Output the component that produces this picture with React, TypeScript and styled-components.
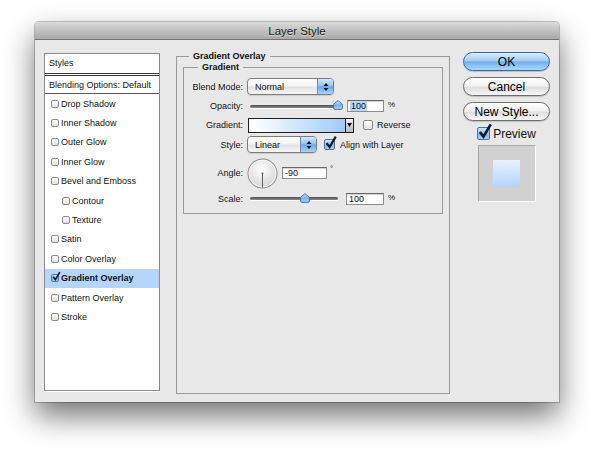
import React from "react";
import styled, { createGlobalStyle } from "styled-components";

const GlobalStyle = createGlobalStyle`
  *, *::before, *::after { box-sizing: border-box; }
  html, body { margin: 0; padding: 0; background: #fff; }
  body { font-family: "Liberation Sans", Arial, sans-serif; color: #111; }
`;

const Page = styled.div`
  width: 594px;
  height: 451px;
  padding: 22px 0 0 35px;
  overflow: hidden;
`;

const Window = styled.div`
  width: 524px;
  height: 380px;
  display: flex;
  flex-direction: column;
  background: #e8e8e8;
  border-radius: 4px 4px 0 0;
  box-shadow: 0 14px 30px rgba(0, 0, 0, 0.55), 0 0 0 1px rgba(0, 0, 0, 0.22);
  font-size: 9px;
`;

const TitleBar = styled.div`
  height: 18px;
  flex: none;
  display: flex;
  align-items: center;
  justify-content: center;
  border-bottom: 1px solid #727272;
  border-radius: 4px 4px 0 0;
  background: linear-gradient(#dadada, #a8a8a8);
  font-size: 11.5px;
  color: #1a1a1a;
  text-shadow: 0 1px 0 rgba(255, 255, 255, 0.45);
`;

const Body = styled.div`
  flex: 1;
  display: flex;
  align-items: flex-start;
  padding: 11px 0 0 9px;
`;

/* ---------- left style list ---------- */

const List = styled.div`
  width: 116px;
  height: 338px;
  margin-top: 2px;
  display: flex;
  flex-direction: column;
  background: #fff;
  border: 1px solid #8c8c8c;
  box-shadow: 0 1px 0 #fbfbfb;
`;

const ListHeader = styled.div`
  height: 22px;
  display: flex;
  align-items: center;
  padding: 0 0 2px 4px;
  border-bottom: 3px double #3a3a3a;
`;

const BlendRow = styled.div`
  height: 18px;
  display: flex;
  align-items: center;
  padding-left: 4px;
  border-bottom: 1px solid #5a5a5a;
`;

const Item = styled.div<{ $indent?: boolean; $selected?: boolean }>`
  height: 19.4px;
  flex: none;
  display: flex;
  align-items: center;
  gap: 2px;
  padding-left: ${(p) => (p.$indent ? 17 : 6)}px;
  background: ${(p) => (p.$selected ? "#b5d5ff" : "transparent")};
  font-weight: ${(p) => (p.$selected ? "bold" : "normal")};
`;

/* ---------- checkbox ---------- */

const Box = styled.span<{ $size: number; $checked?: boolean }>`
  position: relative;
  flex: none;
  display: inline-block;
  width: ${(p) => p.$size}px;
  height: ${(p) => p.$size}px;
  border-radius: 2px;
  border: 1px solid ${(p) => (p.$checked ? "#4f73a0" : "#8a8a8a")};
  background: ${(p) =>
    p.$checked
      ? "linear-gradient(#d3e5f8, #8db8e9 55%, #a9cdf3)"
      : "linear-gradient(#ffffff, #e2e2e2)"};
`;

const Tick = styled.svg`
  position: absolute;
  left: 0;
  top: -2px;
  overflow: visible;
`;

function CheckBox({ size, checked }: { size: number; checked?: boolean }) {
  return (
    <Box $size={size} $checked={checked}>
      {checked && (
        <Tick width={size} height={size} viewBox="0 0 10 10">
          <path d="M1.4 4.6 L4.2 8.2 L9.8 -1.2" fill="none" stroke="#0e1a2c" strokeWidth="2" />
        </Tick>
      )}
    </Box>
  );
}

/* ---------- group boxes ---------- */

const Group = styled.fieldset`
  margin: 0;
  padding: 0;
  min-width: 0;
  border: 1px solid #999;
`;

const OuterGroup = styled(Group)`
  width: 274px;
  height: 343px;
  margin-left: 16px;
`;

const InnerGroup = styled(Group)`
  margin: 0 6px;
`;

const Legend = styled.legend<{ $offset: number }>`
  margin-left: ${(p) => p.$offset}px;
  padding: 0 4px;
  font-size: 9px;
  line-height: 11px;
  font-weight: bold;
`;

const Rows = styled.div`
  display: flex;
  flex-direction: column;
  gap: 3px;
  padding: 5px 0 7px;
`;

const Row = styled.div<{ $h: number; $mt?: number }>`
  height: ${(p) => p.$h}px;
  margin-top: ${(p) => p.$mt || 0}px;
  display: flex;
  align-items: center;
`;

const Label = styled.span`
  width: 59px;
  margin-right: 4px;
  text-align: right;
  flex: none;
`;

/* ---------- popup menu ---------- */

const Popup = styled.div<{ $w: number }>`
  width: ${(p) => p.$w}px;
  height: 100%;
  display: flex;
  align-items: center;
  border: 1px solid #7c7c7c;
  border-radius: 4px;
  overflow: hidden;
  background: linear-gradient(#ffffff, #f3f3f3 48%, #e1e1e1 52%, #f6f6f6);
  box-shadow: 0 1px 1px rgba(0, 0, 0, 0.12);
`;

const PopupText = styled.span`
  flex: 1;
  padding-left: 7px;
`;

const PopupArrows = styled.span`
  width: 16px;
  height: 100%;
  display: flex;
  align-items: center;
  justify-content: center;
  border-left: 1px solid #6d8fbd;
  background: linear-gradient(#d6eafd, #92c3f5 45%, #6aa8ee 52%, #a7d5fc);
`;

function Select({ value, width }: { value: string; width: number }) {
  return (
    <Popup $w={width}>
      <PopupText>{value}</PopupText>
      <PopupArrows>
        <svg width="6" height="10" viewBox="0 0 6 10">
          <path d="M0.5 4 L3 1 L5.5 4 Z M0.5 6 L3 9 L5.5 6 Z" fill="#111" />
        </svg>
      </PopupArrows>
    </Popup>
  );
}

/* ---------- slider ---------- */

const SliderWrap = styled.div`
  position: relative;
  width: 94px;
  height: 100%;
  padding: 0 3px;
  display: flex;
  align-items: center;
  flex: none;
`;

const Track = styled.div`
  width: 100%;
  height: 3px;
  border-radius: 2px;
  background: linear-gradient(#4e4e4e, #8a8a8a);
  box-shadow: 0 1px 0 #fff;
`;

const Thumb = styled.svg`
  position: absolute;
  top: 50%;
  margin: -6px 0 0 -5px;
`;

function Slider({ value }: { value: number }) {
  return (
    <SliderWrap>
      <Track />
      <Thumb width="10" height="10" viewBox="0 0 10 10" style={{ left: `calc(3px + ${value * 88}px)` }}>
        <defs>
          <linearGradient id="thumbFill" x1="0" y1="0" x2="0" y2="1">
            <stop offset="0" stopColor="#d8ebff" />
            <stop offset="0.5" stopColor="#78b1ee" />
            <stop offset="1" stopColor="#a9d4fb" />
          </linearGradient>
        </defs>
        <path
          d="M5 0.6 L9.4 4.2 L9.4 8 Q9.4 9.4 8 9.4 L2 9.4 Q0.6 9.4 0.6 8 L0.6 4.2 Z"
          fill="url(#thumbFill)"
          stroke="#47699a"
          strokeWidth="0.9"
        />
      </Thumb>
    </SliderWrap>
  );
}

/* ---------- text fields ---------- */

const Field = styled.div<{ $w: number; $ml: number }>`
  width: ${(p) => p.$w}px;
  height: 12px;
  margin-left: ${(p) => p.$ml}px;
  flex: none;
  display: flex;
  align-items: center;
  padding-left: 2px;
  background: #fff;
  border: 1px solid #8d8d8d;
  border-top-color: #666;
  box-shadow: inset 0 1px 1px rgba(0, 0, 0, 0.18);
`;

const Selected = styled.span`
  background: #b5d5ff;
  padding: 0 1px;
`;

const Unit = styled.span<{ $ml: number }>`
  align-self: flex-start;
  margin: 2px 0 0 ${(p) => p.$ml}px;
  font-size: 8px;
`;

/* ---------- gradient swatch ---------- */

const GradientBar = styled.div`
  width: 98px;
  height: 15px;
  margin-left: 1px;
  border: 1px solid #1e1e1e;
  background: linear-gradient(to right, #ffffff 4%, #a0caf9);
`;

const GradientArrow = styled.div`
  width: 8px;
  height: 15px;
  display: flex;
  align-items: center;
  justify-content: center;
  border: 1px solid #1e1e1e;
  border-left: none;
  background: linear-gradient(#f2f2f2, #b9b9b9);
`;

const CheckLabel = styled.label<{ $ml: number; $gap: number }>`
  display: flex;
  align-items: center;
  gap: ${(p) => p.$gap}px;
  margin-left: ${(p) => p.$ml}px;
`;

const Degree = styled.span`
  align-self: flex-start;
  margin: 8px 0 0 3px;
  font-size: 8px;
`;

/* ---------- right side ---------- */

const Side = styled.div`
  width: 87px;
  margin: 1px 0 0 13px;
  display: flex;
  flex-direction: column;
  align-items: center;
`;

const AquaButton = styled.button<{ $primary?: boolean }>`
  width: 87px;
  height: 19px;
  margin-bottom: 6px;
  padding: 0;
  border-radius: 10px;
  font-family: inherit;
  font-size: 12px;
  color: #000;
  border: 1px solid ${(p) => (p.$primary ? "#3d67a0" : "#6f6f6f")};
  background: ${(p) =>
    p.$primary
      ? "linear-gradient(#d9edff, #a3ccf6 45%, #73aeee 52%, #a9d9ff)"
      : "linear-gradient(#ffffff, #f2f2f2 46%, #dedede 54%, #f7f7f7)"};
  box-shadow: 0 1px 1px rgba(0, 0, 0, 0.18);
`;

const PreviewRow = styled.label`
  height: 13px;
  display: flex;
  align-items: center;
  gap: 3px;
  font-size: 12px;
`;

const PreviewWell = styled.div`
  width: 58px;
  height: 57px;
  margin-top: 5px;
  display: flex;
  align-items: center;
  justify-content: center;
  background: #d1d1d1;
  border: 1px solid #fff;
  border-top-color: #a9a9a9;
  border-left-color: #a9a9a9;
`;

const PreviewSwatch = styled.div`
  width: 27px;
  height: 27px;
  background: linear-gradient(#e8f2fe, #b3d5fe);
`;

const styleItems = [
  { label: "Drop Shadow" },
  { label: "Inner Shadow" },
  { label: "Outer Glow" },
  { label: "Inner Glow" },
  { label: "Bevel and Emboss" },
  { label: "Contour", indent: true },
  { label: "Texture", indent: true },
  { label: "Satin" },
  { label: "Color Overlay" },
  { label: "Gradient Overlay", checked: true },
  { label: "Pattern Overlay" },
  { label: "Stroke" },
];

export default function App() {
  return (
    <Page>
      <GlobalStyle />
      <Window>
        <TitleBar>Layer Style</TitleBar>
        <Body>
          <List>
            <ListHeader>Styles</ListHeader>
            <BlendRow>Blending Options: Default</BlendRow>
            {styleItems.map((item) => (
              <Item key={item.label} $indent={item.indent} $selected={item.checked}>
                <CheckBox size={8} checked={item.checked} />
                {item.label}
              </Item>
            ))}
          </List>

          <OuterGroup>
            <Legend $offset={12}>Gradient Overlay</Legend>
            <InnerGroup>
              <Legend $offset={14}>Gradient</Legend>
              <Rows>
                <Row $h={17}>
                  <Label>Blend Mode:</Label>
                  <Select value="Normal" width={87} />
                </Row>
                <Row $h={16}>
                  <Label>Opacity:</Label>
                  <Slider value={1} />
                  <Field $w={37} $ml={6}>
                    <Selected>100</Selected>
                  </Field>
                  <Unit $ml={4}>%</Unit>
                </Row>
                <Row $h={16}>
                  <Label>Gradient:</Label>
                  <GradientBar />
                  <GradientArrow>
                    <svg width="5" height="4" viewBox="0 0 5 4">
                      <path d="M0 0 H5 L2.5 4 Z" fill="#000" />
                    </svg>
                  </GradientArrow>
                  <CheckLabel $ml={9} $gap={4}>
                    <CheckBox size={10} />
                    Reverse
                  </CheckLabel>
                </Row>
                <Row $h={17}>
                  <Label>Style:</Label>
                  <Select value="Linear" width={70} />
                  <CheckLabel $ml={7} $gap={5}>
                    <CheckBox size={11} checked />
                    Align with Layer
                  </CheckLabel>
                </Row>
                <Row $h={34}>
                  <Label>Angle:</Label>
                  <svg width="31" height="31" viewBox="0 0 31 31">
                    <defs>
                      <radialGradient id="dialFill" cx="45%" cy="35%" r="70%">
                        <stop offset="0" stopColor="#ffffff" />
                        <stop offset="1" stopColor="#d4d4d4" />
                      </radialGradient>
                    </defs>
                    <circle cx="15.5" cy="15.5" r="15" fill="#8a8a8a" />
                    <circle cx="15.5" cy="15.5" r="14" fill="#f6f6f6" />
                    <circle cx="15.5" cy="15.5" r="12.8" fill="url(#dialFill)" />
                    <line x1="15.5" y1="15.5" x2="15.5" y2="29.5" stroke="#5e5e5e" strokeWidth="1" />
                    <circle cx="15.5" cy="15.5" r="1" fill="#5e5e5e" />
                  </svg>
                  <Field $w={45} $ml={4}>-90</Field>
                  <Degree>°</Degree>
                </Row>
                <Row $h={15} $mt={-2}>
                  <Label>Scale:</Label>
                  <Slider value={0.625} />
                  <Field $w={38} $ml={5}>100</Field>
                  <Unit $ml={4}>%</Unit>
                </Row>
              </Rows>
            </InnerGroup>
          </OuterGroup>

          <Side>
            <AquaButton $primary>OK</AquaButton>
            <AquaButton>Cancel</AquaButton>
            <AquaButton>New Style...</AquaButton>
            <PreviewRow>
              <CheckBox size={13} checked />
              Preview
            </PreviewRow>
            <PreviewWell>
              <PreviewSwatch />
            </PreviewWell>
          </Side>
        </Body>
      </Window>
    </Page>
  );
}
